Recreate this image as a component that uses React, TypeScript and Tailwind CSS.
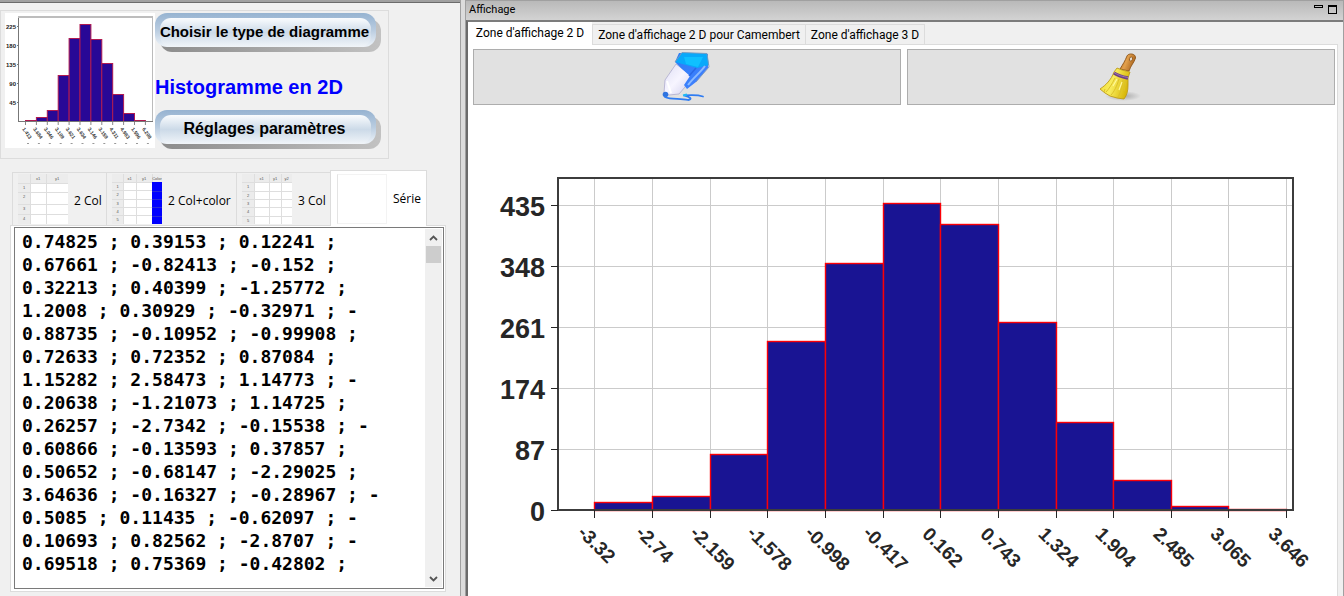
import { useState } from "react";

const serieText = `0.74825 ; 0.39153 ; 0.12241 ;
0.67661 ; -0.82413 ; -0.152 ;
0.32213 ; 0.40399 ; -1.25772 ;
1.2008 ; 0.30929 ; -0.32971 ; -
0.88735 ; -0.10952 ; -0.99908 ;
0.72633 ; 0.72352 ; 0.87084 ;
1.15282 ; 2.58473 ; 1.14773 ; -
0.20638 ; -1.21073 ; 1.14725 ;
0.26257 ; -2.7342 ; -0.15538 ; -
0.60866 ; -0.13593 ; 0.37857 ;
0.50652 ; -0.68147 ; -2.29025 ;
3.64636 ; -0.16327 ; -0.28967 ; -
0.5085 ; 0.11435 ; -0.62097 ; -
0.10693 ; 0.82562 ; -2.8707 ; -
0.69518 ; 0.75369 ; -0.42802 ;`;

// x position of every class limit, with its label
const xTicks = [
  { x: 126, label: "-3.32" },
  { x: 184, label: "-2.74" },
  { x: 242, label: "-2.159" },
  { x: 299, label: "-1.578" },
  { x: 357, label: "-0.998" },
  { x: 415, label: "-0.417" },
  { x: 472, label: "0.162" },
  { x: 530, label: "0.743" },
  { x: 588, label: "1.324" },
  { x: 645, label: "1.904" },
  { x: 703, label: "2.485" },
  { x: 760, label: "3.065" },
  { x: 818, label: "3.646" },
];

const yTicks = [
  { y: 100, label: "435" },
  { y: 161, label: "348" },
  { y: 222, label: "261" },
  { y: 283, label: "174" },
  { y: 344, label: "87" },
  { y: 405, label: "0" },
];

const barTops = [397, 391, 349, 236, 158, 98, 119, 217, 317, 375, 401, 404];

function Histogram() {
  return (
    <svg viewBox="0 0 869 491" className="block w-full" fontFamily="'Liberation Sans', Arial, sans-serif">
      <g stroke="#cbcbcb">
        {yTicks.map((t) => (
          <path key={t.y} d={`M90 ${t.y + 0.5}H825`} />
        ))}
        {xTicks.map((t) => (
          <path key={t.x} d={`M${t.x + 0.5} 73V405`} />
        ))}
      </g>
      <rect x="90" y="73" width="735" height="332" fill="none" stroke="#3c3c3c" strokeWidth="2" />
      {barTops.map((top, i) => (
        <rect
          key={i}
          x={xTicks[i].x + 0.5}
          y={top + 0.5}
          width={xTicks[i + 1].x - xTicks[i].x}
          height={405 - top}
          fill="#191493"
          stroke="#fb0007"
          strokeWidth="1.4"
        />
      ))}
      <path d="M89 405H826" stroke="#3c3c3c" strokeWidth="2" />
      <g stroke="#262626">
        {yTicks.map((t) => (
          <path key={t.y} d={`M83 ${t.y + 0.5}H90`} />
        ))}
        {xTicks.map((t) => (
          <path key={t.x} d={`M${t.x + 0.5} 405V413`} />
        ))}
      </g>
      <g fill="#262626" fontWeight="bold">
        {yTicks.map((t) => (
          <text key={t.y} x="77" y={t.y + 11} fontSize="27" textAnchor="end">
            {t.label}
          </text>
        ))}
        {xTicks.map((t) => {
          const cy = t.label.startsWith("-") ? (t.label.length > 5 ? 443 : 439) : 442;
          return (
            <text
              key={t.x}
              fontSize="19"
              textAnchor="middle"
              transform={`translate(${t.x + 3} ${cy}) rotate(45)`}
              y="7"
            >
              {t.label}
            </text>
          );
        })}
      </g>
    </svg>
  );
}

const thumbTops = [107, 104, 97, 62, 25, 11, 26, 50, 81, 100, 107];
const thumbX = ["1.413", "3.684", "3.046", "3.109", "3.621", "3.634", "3.146", "3.159", "4.311", "4.983", "1.596", "6.208"];

function HistogramThumb() {
  return (
    <svg width="150" height="135" className="shrink-0 bg-white" fontFamily="'Liberation Sans', sans-serif">
      <path d="M13.5 108V4" stroke="#777" fill="none" />
      <path d="M13 4H148" stroke="#bdbdbd" strokeWidth="2" />
      <path d="M147.5 4V108" stroke="#bbb" />
      {thumbTops.map((top, i) => (
        <rect key={i} x={20.5 + i * 10.9} y={top + 0.5} width="10.9" height={108 - top} fill="#280896" stroke="#b01a50" />
      ))}
      <path d="M13 108.5H148" stroke="#777" />
      {["225", "180", "135", "90", "45"].map((label, i) => (
        <g key={label}>
          <path d={`M12 ${13.5 + i * 19}h2`} stroke="#777" />
          <text x="11" y={16 + i * 19} fontSize="6" fontWeight="bold" fill="#222" textAnchor="end">
            {label}
          </text>
        </g>
      ))}
      {thumbX.map((label, i) => (
        <g key={label}>
          <path d={`M${20.5 + i * 10.9} 109v3`} stroke="#888" />
          <text fontSize="5" fontWeight="bold" fill="#333" transform={`translate(${17 + i * 10.9} 116) rotate(55)`}>
            {label}
          </text>
          <path d={`M${22 + i * 10.9} 130.5h2`} stroke="#999" />
        </g>
      ))}
    </svg>
  );
}

function GlossyButton({ children, big }: { children: string; big?: boolean }) {
  return (
    <button type="button" className="relative block h-[39px] w-[226px]">
      <span className="absolute top-[6px] right-0 bottom-0 left-[5px] rounded-[12px] bg-gradient-to-r from-[#8c8c8c] to-[#c2c2c2]" />
      <span className="absolute top-0 right-[5px] bottom-[5px] left-0 rounded-[12px] bg-gradient-to-b from-[#96b3d1] via-[#b9cce0] to-[#eff4f9]" />
      <span className="absolute top-[5px] right-[10px] bottom-[5px] left-[5px] rounded-[11px] bg-gradient-to-b from-[#fafcfe] via-[#ccdae8] to-[#f1f5f9]" />
      <span className={`absolute top-0 right-[7px] left-0 text-center leading-[38px] font-bold whitespace-nowrap text-black ${big ? "text-[16px]" : "text-[15px]"}`}>
        {children}
      </span>
    </button>
  );
}

// small picture of a data grid: column limits, row limits, optional filled last column
function GridThumb({ cols, rows, heads, filled }: { cols: number[]; rows: number[]; heads: string[]; filled?: boolean }) {
  const bounds = [...cols, 50];
  return (
    <svg width="50" height="50" className="shrink-0" fontFamily="'Liberation Sans', sans-serif">
      <rect width="50" height="50" fill="#ececec" />
      <rect x={cols[0]} y={rows[0]} width={50 - cols[0]} height={50 - rows[0]} fill="#fff" />
      <g stroke="#dedede">
        {rows.map((y) => (
          <path key={y} d={`M0 ${y + 0.5}H50`} />
        ))}
        {cols.map((x) => (
          <path key={x} d={`M${x + 0.5} 0V50`} />
        ))}
      </g>
      {filled && <rect x="40" y={rows[0]} width="10" height={50 - rows[0]} fill="#00f" />}
      {filled && <path d="M40 17.5h10M40 25.5h10M40 33.5h10M40 42.5h10" stroke="#2a2ad8" />}
      <g fontSize="4" fill="#555" textAnchor="middle">
        {heads.map((h, i) => (
          <text key={i} x={(bounds[i] + bounds[i + 1]) / 2} y="6">
            {h}
          </text>
        ))}
        {rows.map((y, i) => (
          <text key={i} x={cols[0] / 2} y={y + 6}>
            {i + 1}
          </text>
        ))}
      </g>
    </svg>
  );
}

function PenIcon() {
  return (
    <svg width="50" height="52" viewBox="0 0 50 52">
      <defs>
        <linearGradient id="penBody" x1="0" y1="0" x2="1" y2="1">
          <stop offset="0" stopColor="#2b7df6" />
          <stop offset="1" stopColor="#4480ff" />
        </linearGradient>
        <linearGradient id="penCone" x1="0" y1="0" x2="1" y2="1">
          <stop offset="0" stopColor="#dedef4" />
          <stop offset="0.5" stopColor="#f7f5ff" />
          <stop offset="1" stopColor="#cfcdec" />
        </linearGradient>
      </defs>
      <path d="M14 13L3 29L2 42L7 44L17 43L23 36L30 25Z" fill="url(#penCone)" stroke="#aeacce" strokeWidth="0.8" />
      <path d="M17 2L13 11L20 18L28 25L22 34L25 38L34 31L46 17L46 3Z" fill="url(#penBody)" />
      <path d="M20 1.5L45 2.5L47 14L35 17L13 11Z" fill="#08a9fa" />
      <path d="M22 6L41 6L36 16L24 13Z" fill="#0fc0ff" />
      <path d="M13 11L20 1.500L45 2.500L47 16L34 31" fill="none" stroke="#7a98bd" strokeWidth="0.900" />
      <path d="M43 15C38 22 32 26 26 34" fill="none" stroke="#8bbaff" strokeWidth="2" />
      <path d="M34 17L27 25" stroke="#2a68e6" strokeWidth="1.500" />
      <path d="M5 30L9 42" stroke="#fff" strokeWidth="2" />
      <circle cx="3.500" cy="43.500" r="2.800" fill="#2f74df" />
      <path d="M3 46C9 49 18 47 26 49C31 48 28 46 22 44.500C28 44 35 43.500 41 45.500" fill="none" stroke="#2f7cf2" strokeWidth="1.800" strokeLinecap="round" />
      <path d="M21 44.500L25 43.500" stroke="#20baf5" strokeWidth="2" />
    </svg>
  );
}

function BroomIcon() {
  return (
    <svg width="48" height="52" viewBox="0 0 48 52">
      <defs>
        <linearGradient id="broomHandle" x1="0" y1="0" x2="1" y2="0.400">
          <stop offset="0" stopColor="#b56a1c" />
          <stop offset="0.500" stopColor="#e2a04c" />
          <stop offset="1" stopColor="#a9641d" />
        </linearGradient>
        <linearGradient id="broomHair" x1="0" y1="0" x2="1" y2="0.300">
          <stop offset="0" stopColor="#f0dc30" />
          <stop offset="0.500" stopColor="#f8ec5c" />
          <stop offset="1" stopColor="#d9b90c" />
        </linearGradient>
        <radialGradient id="broomShade">
          <stop offset="0" stopColor="#999" stopOpacity="0.800" />
          <stop offset="1" stopColor="#999" stopOpacity="0" />
        </radialGradient>
      </defs>
      <ellipse cx="26" cy="45" rx="18" ry="5" fill="url(#broomShade)" />
      <path d="M30 5C31 2 39 2 38.500 7C37 12 34 14 32 20L23 18C26 13 28 10 30 5Z" fill="url(#broomHandle)" stroke="#8e5518" strokeWidth="0.900" />
      <ellipse cx="34" cy="8" rx="1.500" ry="2.200" fill="#e4dcd0" stroke="#8e5518" strokeWidth="0.800" transform="rotate(20 34 8)" />
      <path d="M20 17L25 19L33 21L31 27L31 34C31 40 30 44 27 48L20 47L13 45L8 42L3 38C9 34 14 29 17 21Z" fill="url(#broomHair)" stroke="#bd9b1b" strokeWidth="0.900" />
      <path d="M18 27C15 33 12 38 9 41M22 28C20 35 17 41 14 44M26 29C25 37 23 43 21 46M8 38L7 41M29 30L27 40" fill="none" stroke="#dcc02a" />
      <path d="M20 28L16 35M25 31L22 39" stroke="#fff79a" strokeWidth="1.200" />
      <path d="M17 22C21 25 26 26 31 27" fill="none" stroke="#6d4182" strokeWidth="3.400" />
      <path d="M17 21.500C21 24.500 26 25.500 31 26.500" fill="none" stroke="#a17bb8" strokeWidth="0.900" />
    </svg>
  );
}

const dataTabs = [
  { label: "2 Col", className: "w-[94px]", thumb: <GridThumb cols={[12, 28]} rows={[9, 18, 30, 40]} heads={["x1", "y1"]} /> },
  { label: "2 Col+color", className: "w-[130px]", thumb: <GridThumb cols={[11, 24, 40]} rows={[8, 16, 25, 33, 41]} heads={["x1", "y1", "Color"]} filled /> },
  { label: "3 Col", className: "w-[94px]", thumb: <GridThumb cols={[12, 27, 39]} rows={[8, 17, 25, 33, 42]} heads={["x1", "y1", "y2"]} /> },
];

const viewTabs = ["Zone d'affichage 2 D", "Zone d'affichage 2 D pour Camembert", "Zone d'affichage 3 D"];

export default function App() {
  const [text, setText] = useState(serieText);

  return (
    <div className="flex h-screen overflow-hidden bg-[#dcdcdc] font-['Liberation_Sans',Arial,sans-serif] text-black">
      {/* Left panel */}
      <aside className="flex w-[461px] shrink-0 flex-col border-t-2 border-r border-[#a0a0a0] bg-[#f0f0f0]">
        <div className="h-px shrink-0 bg-[#6b6b6b]" />
        <div className="mt-[7px] flex w-[389px] shrink-0 border border-[#dcdcdc] pt-[2px] pb-[9px] pl-1">
          <HistogramThumb />
          <div className="flex h-[136px] flex-col justify-between">
            <GlossyButton>Choisir le type de diagramme</GlossyButton>
            <h1 className="mt-3 text-[20px] leading-6 font-bold whitespace-nowrap text-[#00f]">Histogramme en 2D</h1>
            <GlossyButton big>Réglages paramètres</GlossyButton>
          </div>
        </div>

        {/* Data tabs */}
        <div role="tablist" className="mt-[11px] ml-3 flex shrink-0 items-end font-['Open_Sans','Noto_Sans',sans-serif] text-[12px]">
          {dataTabs.map((tab) => (
            <button
              key={tab.label}
              type="button"
              role="tab"
              aria-selected={false}
              className={`flex h-[53px] items-center gap-[6px] border-t border-l border-[#dcdcdc] pl-[5px] whitespace-nowrap ${tab.className}`}
            >
              {tab.thumb}
              <span className="pt-[3px]">{tab.label}</span>
            </button>
          ))}
          <button
            type="button"
            role="tab"
            aria-selected={true}
            className="relative z-10 -mb-px flex h-[56px] w-[97px] items-center gap-[6px] border border-b-0 border-[#dcdcdc] bg-white pl-[6px]"
          >
            <span className="h-[50px] w-[50px] border border-[#f3f3f3] border-l-[#e4e4e4]" />
            Série
          </button>
        </div>

        {/* Data entry */}
        <div className="mr-[14px] mb-1 ml-[10px] flex min-h-0 flex-1 border border-[#dcdcdc] bg-white pt-px pr-px pb-[2px] pl-[3px]">
          <div className="flex flex-1 border border-[#7a7a7a] p-px">
            <textarea
              aria-label="Série"
              value={text}
              onChange={(e) => setText(e.target.value)}
              spellCheck={false}
              wrap="off"
              className="block min-w-0 flex-1 resize-none overflow-hidden bg-white pt-px pl-[6px] font-['DejaVu_Sans_Mono','Liberation_Mono',monospace] text-[18px] leading-[23px] font-bold outline-none"
            />
            <div className="flex w-[17px] flex-col items-center bg-[#f0f0f0]">
              <button type="button" aria-label="Défiler vers le haut" className="flex h-[17px] w-full items-center justify-center">
                <svg width="9" height="6" viewBox="0 0 9 6">
                  <path d="M1 5L4.500 1.500L8 5" fill="none" stroke="#555" strokeWidth="1.800" />
                </svg>
              </button>
              <div className="h-[17px] w-[15px] bg-[#cdcdcd]" />
              <button type="button" aria-label="Défiler vers le bas" className="mt-auto flex h-[17px] w-full items-center justify-center">
                <svg width="9" height="6" viewBox="0 0 9 6">
                  <path d="M1 1L4.500 4.500L8 1" fill="none" stroke="#555" strokeWidth="1.800" />
                </svg>
              </button>
            </div>
          </div>
        </div>
      </aside>

      {/* Display window */}
      <section className="ml-1 flex min-w-0 flex-1 flex-col border-t border-r border-l border-[#a0a0a0] bg-[#f0f0f0]">
        <header className="flex h-[19px] shrink-0 items-center justify-between bg-gradient-to-b from-[#b9b9b9] to-[#d3d3d3] pr-[6px] pl-[3px] font-['Roboto','Liberation_Sans',sans-serif] text-[11px]">
          <span>Affichage</span>
          <div className="flex items-start gap-[5px] pb-[2px]">
            <button type="button" aria-label="Réduire" className="h-[3px] w-[9px] border border-black" />
            <button type="button" aria-label="Agrandir" className="h-[9px] w-[9px] border border-t-2 border-black" />
          </div>
        </header>
        <div className="flex min-h-0 flex-1 flex-col border-t-2 border-l-2 border-[#6b6b6b] border-t-[#7c7c7c] pr-[5px]">
          <div role="tablist" className="flex h-[23px] shrink-0 items-stretch font-['Roboto','Open_Sans',sans-serif] text-[12px] whitespace-nowrap">
            <button type="button" role="tab" aria-selected={true} className="w-[124px] bg-white pb-px">
              {viewTabs[0]}
            </button>
            <div className="flex flex-1 border-b border-[#dcdcdc] pt-[2px]">
              <button type="button" role="tab" aria-selected={false} className="w-[213px] border-t border-l border-[#dcdcdc]">
                {viewTabs[1]}
              </button>
              <button type="button" role="tab" aria-selected={false} className="w-[120px] border-x border-t border-[#dcdcdc]">
                {viewTabs[2]}
              </button>
            </div>
          </div>
          <div className="min-h-0 flex-1 overflow-hidden border-r border-[#dcdcdc] bg-white">
            <div className="grid grid-cols-2 gap-[6px] pt-1 pr-[2px] pl-[5px]">
              <button type="button" aria-label="Dessiner" className="flex h-[56px] items-center justify-center border border-[#adadad] bg-[#e1e1e1]">
                <PenIcon />
              </button>
              <button type="button" aria-label="Effacer" className="flex h-[56px] items-center justify-center border border-[#adadad] bg-[#e1e1e1]">
                <BroomIcon />
              </button>
            </div>
            <Histogram />
          </div>
        </div>
      </section>
    </div>
  );
}
